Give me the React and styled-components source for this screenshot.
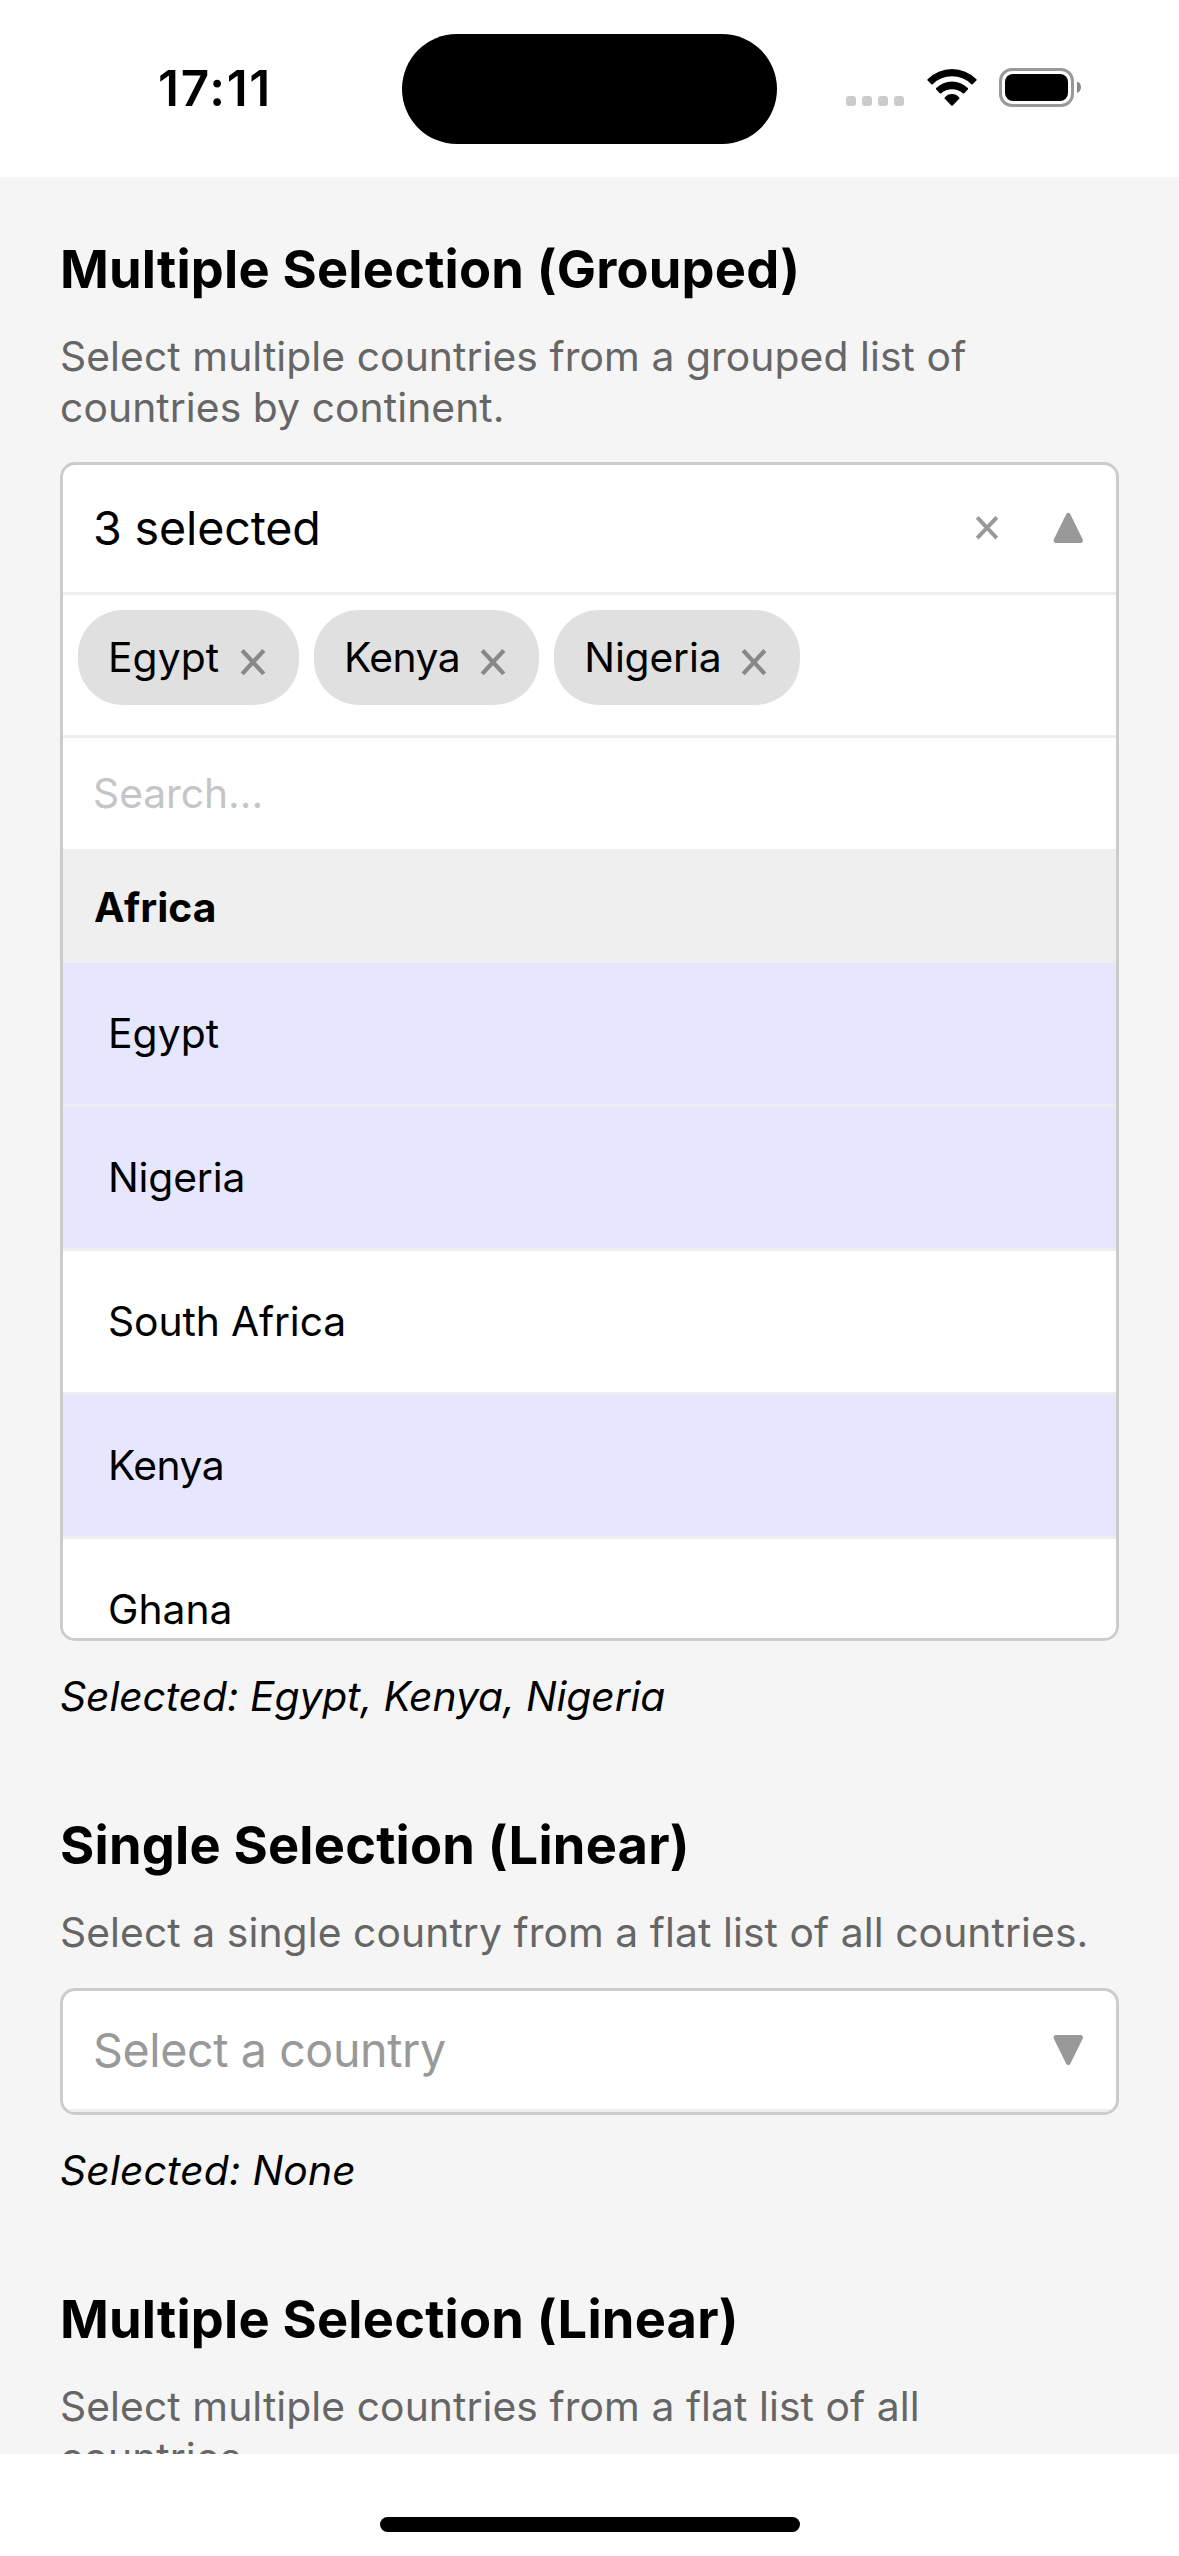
import React from "react";
import styled, { createGlobalStyle } from "styled-components";

const GlobalStyle = createGlobalStyle`
  *, *::before, *::after { box-sizing: border-box; }
  body {
    margin: 0;
    background: #fff;
    color: #000;
    font-family: Inter, "Liberation Sans", sans-serif;
  }
`;

const Screen = styled.div`
  display: flex;
  flex-direction: column;
  width: 1179px;
  height: 2556px;
  overflow: hidden;
  background: #fff;
`;

/* ---------- status bar ---------- */

const StatusBar = styled.header`
  display: grid;
  grid-template-columns: 402px 375px 1fr;
  flex: none;
  height: 177px;
  background: #fff;
`;

const Clock = styled.time`
  padding: 58px 0 0 158px;
  font-size: 49.5px;
  font-weight: 600;
  line-height: 60px;
  letter-spacing: 1.7px;
`;

const Island = styled.div`
  height: 110px;
  margin-top: 34px;
  border-radius: 55px;
  background: #000;
`;

const StatusIcons = styled.div`
  display: flex;
  align-items: flex-start;
  padding: 68px 0 0 69px;
`;

const SignalDots = styled.div`
  display: flex;
  gap: 6px;
  margin-top: 28px;
`;

const Dot = styled.i`
  width: 10px;
  height: 10px;
  border-radius: 3px;
  background: #ccc;
`;

const WifiIcon = styled.svg`
  width: 50px;
  height: 37px;
  margin: 1px 0 0 22.7px;
`;

const BatteryIcon = styled.svg`
  width: 82px;
  height: 39px;
  margin-left: 22.3px;
`;

/* ---------- content ---------- */

const Content = styled.main`
  flex: none;
  height: 2277px;
  padding: 60px 60px 0;
  overflow: hidden;
  background: #f5f5f5;
`;

const Section = styled.section`
  margin-bottom: 92px;
`;

const Title = styled.h2`
  margin: 0 0 30px;
  font-size: 52.4px;
  font-weight: 700;
  line-height: 64px;
  letter-spacing: 0.2px;
`;

const Description = styled.p`
  height: ${(p) => (p.$lines === 2 ? 101 : 51)}px;
  margin: 0 0 30px;
  color: #666;
  font-size: 40.8px;
  line-height: 51px;
  letter-spacing: 0.08px;
`;

const Summary = styled.p`
  margin: 30px 0 0;
  font-size: 40.8px;
  font-style: italic;
  line-height: 50px;
  letter-spacing: ${(p) => p.$tracking}px;
`;

/* ---------- dropdown ---------- */

const Dropdown = styled.div`
  height: ${(p) => (p.$open ? 1179 : 127)}px;
  overflow: hidden;
  border: 3px solid #ccc;
  border-radius: 15px;
  background: #fff;
`;

const DropdownHeader = styled.div`
  display: flex;
  align-items: center;
  height: ${(p) => (p.$open ? 130 : 121)}px;
  padding: 0 30px ${(p) => (p.$open ? 1 : 0)}px;
  border-bottom: 3px solid #eee;
`;

const Value = styled.span`
  flex: 1;
  color: ${(p) => (p.$placeholder ? "#999" : "#000")};
  font-size: 46.6px;
  line-height: 56px;
  letter-spacing: ${(p) => (p.$placeholder ? -0.4 : -0.15)}px;
`;

const HeaderIcon = styled.svg`
  flex: none;
  width: 36px;
  height: 36px;
  color: #999;
`;

const ClearIcon = styled(HeaderIcon)`
  margin-right: 45px;
`;

const ArrowIcon = styled(HeaderIcon)`
  transform: ${(p) => (p.$up ? "none" : "scaleY(-1)")};
`;

const Chips = styled.div`
  display: flex;
  gap: 15px;
  height: 143px;
  padding: 15px;
  border-bottom: 3px solid #eee;
`;

const Chip = styled.div`
  display: flex;
  align-items: center;
  height: 95px;
  padding: 0 30px 1px;
  border-radius: 45px;
  background: #e0e0e0;
`;

const ChipLabel = styled.span`
  width: ${(p) => p.$width}px;
  font-size: 40.8px;
  line-height: 50px;
  letter-spacing: ${(p) => p.$tracking}px;
  white-space: nowrap;
`;

const ChipRemove = styled.svg`
  flex: none;
  width: 32px;
  height: 32px;
  margin: 9px 0 0 18px;
  color: #888;
`;

const Search = styled.div`
  height: 114px;
  padding: 30px;
  border-bottom: 3px solid #eee;
  color: #c5c5c7;
  font-size: 40.8px;
  line-height: 50px;
  letter-spacing: -0.05px;
`;

const GroupName = styled.div`
  height: 111px;
  padding: 30px 30px 30px 31px;
  background: #efefef;
  font-size: 40.8px;
  font-weight: 700;
  line-height: 50px;
`;

const Option = styled.div`
  height: 144px;
  padding: 45px;
  border-bottom: 3px solid #eee;
  background: ${(p) => (p.$selected ? "#e6e6ff" : "#fff")};
  font-size: 40.8px;
  line-height: 50px;
  letter-spacing: ${(p) => p.$tracking || 0}px;
`;

/* ---------- home indicator ---------- */

const BottomBar = styled.footer`
  display: flex;
  flex: 1;
  justify-content: center;
  padding-top: 63px;
  background: #fff;
`;

const HomeIndicator = styled.div`
  width: 420px;
  height: 15px;
  border-radius: 7.5px;
  background: #000;
`;

const chips = [
  { name: "Egypt", width: 111, tracking: 0.1 },
  { name: "Kenya", width: 115.3, tracking: -0.5 },
  { name: "Nigeria", width: 135.7, tracking: -0.15 },
];

const options = [
  { name: "Egypt", selected: true, tracking: 0.1 },
  { name: "Nigeria", selected: true, tracking: -0.15 },
  { name: "South Africa", selected: false, tracking: -0.12 },
  { name: "Kenya", selected: true, tracking: -0.5 },
  { name: "Ghana", selected: false },
];

function Arrow({ up }) {
  return (
    <ArrowIcon viewBox="0 0 36 36" $up={up}>
      <path
        d="M18.25 5.2 L5.8 30.6 H30.7 Z"
        fill="currentColor"
        stroke="currentColor"
        strokeWidth="4.6"
        strokeLinejoin="round"
      />
    </ArrowIcon>
  );
}

function PhoneStatus() {
  return (
    <StatusBar>
      <Clock>17:11</Clock>
      <Island />
      <StatusIcons>
        <SignalDots>
          <Dot />
          <Dot />
          <Dot />
          <Dot />
        </SignalDots>
        <WifiIcon viewBox="0 0 50 37">
          <path d="M.6 10.2A34.5 34.5 0 0 1 49.4 10.2Q50 11 49.4 11.6L45.6 15.2Q45 15.7 44.3 15.2A27.6 27.6 0 0 0 5.7 15.2Q5 15.7 4.4 15.2L.6 11.6Q0 11 .6 10.2Z" />
          <path d="M9.2 19.1A22 22 0 0 1 40.8 19.1Q41.6 19.9 40.8 20.6L37.2 24.2Q36.6 24.9 35.8 24.2A17 17 0 0 0 14.2 24.2Q13.4 24.9 12.8 24.2L9.2 20.6Q8.4 19.9 9.2 19.1Z" />
          <path d="M17.8 28.4A9.3 9.3 0 0 1 32.2 28.4Q32.9 29.1 32.2 29.8L25.7 36.4Q25 37 24.3 36.4L17.8 29.8Q17.1 29.1 17.8 28.4Z" />
        </WifiIcon>
        <BatteryIcon viewBox="0 0 82 39">
          <rect x="1.5" y="1.5" width="72" height="36" rx="11.5" fill="none" stroke="#999" strokeWidth="3" />
          <rect x="6" y="6" width="63" height="27" rx="8" />
          <path d="M78 13.6Q82 15.4 82 19.3T78 25Z" fill="#888" />
        </BatteryIcon>
      </StatusIcons>
    </StatusBar>
  );
}

export default function App() {
  return (
    <Screen>
      <GlobalStyle />
      <PhoneStatus />
      <Content>
        <Section>
          <Title>Multiple Selection (Grouped)</Title>
          <Description $lines={2}>
            Select multiple countries from a grouped list of
            <br />
            countries by continent.
          </Description>
          <Dropdown $open>
            <DropdownHeader $open>
              <Value>3 selected</Value>
              <ClearIcon viewBox="0 0 36 36">
                <path d="M8.2 7.3 27.8 28.1M27.8 7.3 8.2 28.1" stroke="currentColor" strokeWidth="3.9" />
              </ClearIcon>
              <Arrow up />
            </DropdownHeader>
            <Chips>
              {chips.map((c) => (
                <Chip key={c.name}>
                  <ChipLabel $width={c.width} $tracking={c.tracking}>
                    {c.name}
                  </ChipLabel>
                  <ChipRemove viewBox="0 0 32 32">
                    <path d="M5.2 4.5 26.8 27.9M26.8 4.5 5.2 27.9" stroke="currentColor" strokeWidth="4.2" />
                  </ChipRemove>
                </Chip>
              ))}
            </Chips>
            <Search>Search...</Search>
            <GroupName>Africa</GroupName>
            {options.map((o) => (
              <Option key={o.name} $selected={o.selected} $tracking={o.tracking}>
                {o.name}
              </Option>
            ))}
          </Dropdown>
          <Summary $tracking={-0.1}>Selected: Egypt, Kenya, Nigeria</Summary>
        </Section>

        <Section>
          <Title>Single Selection (Linear)</Title>
          <Description $lines={1}>Select a single country from a flat list of all countries.</Description>
          <Dropdown>
            <DropdownHeader>
              <Value $placeholder>Select a country</Value>
              <Arrow />
            </DropdownHeader>
          </Dropdown>
          <Summary $tracking={0.14}>Selected: None</Summary>
        </Section>

        <Section>
          <Title>Multiple Selection (Linear)</Title>
          <Description $lines={2}>
            Select multiple countries from a flat list of all
            <br />
            countries.
          </Description>
        </Section>
      </Content>
      <BottomBar>
        <HomeIndicator />
      </BottomBar>
    </Screen>
  );
}
